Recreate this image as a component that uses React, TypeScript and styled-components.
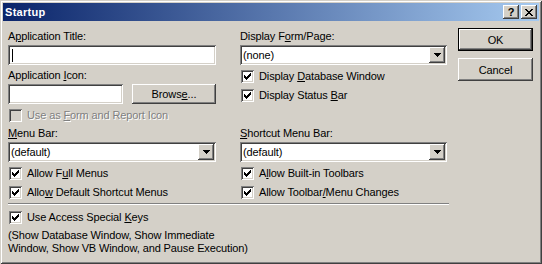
import React from 'react';
import styled, { createGlobalStyle, css } from 'styled-components';

const face = '#d4d0c8';
const shade = '#808080';
const dark = '#404040';
const light = '#ffffff';

const GlobalStyle = createGlobalStyle`
  html, body {
    margin: 0;
    padding: 0;
    background: ${face};
  }
  body {
    font-family: Tahoma, "Liberation Sans", Arial, sans-serif;
    font-size: 11px;
    letter-spacing: -0.12px;
    color: #000;
  }
`;

// classic 3D edges
const raised = css`
  box-shadow: inset -1px -1px ${dark}, inset 1px 1px ${light}, inset -2px -2px ${shade}, inset 2px 2px ${face};
`;

const sunken = css`
  box-shadow: inset 1px 1px ${shade}, inset -1px -1px ${light}, inset 2px 2px ${dark}, inset -2px -2px ${face};
`;

const Window = styled.div`
  width: 542px;
  height: 264px;
  box-sizing: border-box;
  padding: 3px;
  background: ${face};
  box-shadow: inset 1px 1px ${face}, inset -1px -1px ${dark}, inset 2px 2px ${light}, inset -2px -2px ${shade};
  display: flex;
  flex-direction: column;
`;

const TitleBar = styled.div`
  height: 18px;
  flex: none;
  display: flex;
  align-items: center;
  padding: 0 2px 0 2px;
  background: linear-gradient(to right, #0a246a, #a6caf0);
`;

const Title = styled.div`
  flex: 1;
  color: #fff;
  font-weight: bold;
  font-size: 11px;
  letter-spacing: 0.3px;
`;

const CaptionButton = styled.div<{ $gap?: number }>`
  width: 16px;
  height: 14px;
  box-sizing: border-box;
  margin-left: ${(p) => p.$gap ?? 0}px;
  background: ${face};
  ${raised};
  display: flex;
  align-items: center;
  justify-content: center;
  font-weight: bold;
  font-size: 11px;
  line-height: 14px;
  color: #000;
`;

const Client = styled.div`
  flex: 1;
  display: flex;
  padding-left: 5px;
`;

const Main = styled.div`
  width: 441px;
  padding-top: 9px;
  display: flex;
  flex-direction: column;
`;

const Section = styled.div<{ $mt?: number }>`
  display: grid;
  grid-template-columns: 208px 207px;
  column-gap: 24px;
  margin-top: ${(p) => p.$mt ?? 0}px;
`;

const Stack = styled.div`
  display: flex;
  flex-direction: column;
`;

const Label = styled.div<{ $mt?: number }>`
  margin-top: ${(p) => p.$mt ?? 0}px;
  height: 13px;
  line-height: 13px;
  white-space: nowrap;
`;

const Field = styled.div<{ $mt?: number; $width?: number }>`
  margin-top: ${(p) => p.$mt ?? 0}px;
  width: ${(p) => (p.$width ? `${p.$width}px` : 'auto')};
  height: 20px;
  box-sizing: border-box;
  padding: 2px;
  background: #fff;
  ${sunken};
  display: flex;
  align-items: center;
`;

const Caret = styled.span`
  width: 1px;
  height: 13px;
  margin-left: 2px;
  background: #000;
`;

const ComboText = styled.div`
  flex: 1;
  padding-left: 1px;
  line-height: 16px;
  white-space: nowrap;
`;

const DropButton = styled.div`
  width: 16px;
  height: 16px;
  flex: none;
  box-sizing: border-box;
  background: ${face};
  ${raised};
  display: flex;
  align-items: center;
  justify-content: center;
`;

const IconRow = styled.div<{ $mt?: number }>`
  margin-top: ${(p) => p.$mt ?? 0}px;
  display: flex;
  justify-content: space-between;
`;

const PushButton = styled.div<{ $width: number; $height: number; $default?: boolean }>`
  width: ${(p) => p.$width}px;
  height: ${(p) => p.$height}px;
  box-sizing: border-box;
  background: ${face};
  ${raised};
  border: ${(p) => (p.$default ? '1px solid #000' : 'none')};
  display: flex;
  align-items: center;
  justify-content: center;
  white-space: nowrap;
  flex: none;
`;

const CheckRow = styled.div<{ $mt?: number; $disabled?: boolean }>`
  margin-top: ${(p) => p.$mt ?? 0}px;
  height: 13px;
  padding-left: 1px;
  display: flex;
  align-items: flex-start;
  line-height: 13px;
  white-space: nowrap;
  color: ${(p) => (p.$disabled ? shade : '#000')};
  text-shadow: ${(p) => (p.$disabled ? `1px 1px 0 ${light}` : 'none')};
`;

const Box = styled.span<{ $disabled?: boolean }>`
  width: 13px;
  height: 13px;
  flex: none;
  box-sizing: border-box;
  margin-right: 5px;
  background: ${(p) => (p.$disabled ? face : '#fff')};
  ${sunken};
  display: flex;
  align-items: center;
  justify-content: center;
`;

const Separator = styled.div<{ $mt?: number }>`
  margin-top: ${(p) => p.$mt ?? 0}px;
  height: 0;
  border-top: 1px solid ${shade};
  border-bottom: 1px solid ${light};
`;

const Note = styled.div`
  margin-top: 5px;
  line-height: 13px;
  white-space: nowrap;
`;

const ButtonColumn = styled.div`
  margin-left: 9px;
  padding-top: 7px;
  display: flex;
  flex-direction: column;
  gap: 7px;
`;

const Key = styled.u`
  text-decoration: underline;
  text-underline-offset: 1px;
`;

const CheckMark = () => (
  <svg width="7" height="7" viewBox="0 0 7 7" shapeRendering="crispEdges">
    {[2, 3, 4, 3, 2, 1, 0].map((y, x) => (
      <rect key={x} x={x} y={y} width="1" height="3" fill="#000" />
    ))}
  </svg>
);

const CloseGlyph = () => (
  <svg width="8" height="7" viewBox="0 0 8 7" shapeRendering="crispEdges">
    {[0, 1, 2, 3, 2, 1, 0].map((x, y) => (
      <React.Fragment key={y}>
        <rect x={x} y={y} width="2" height="1" fill="#000" />
        <rect x={6 - x} y={y} width="2" height="1" fill="#000" />
      </React.Fragment>
    ))}
  </svg>
);

const DownArrow = () => (
  <svg width="7" height="4" viewBox="0 0 7 4" shapeRendering="crispEdges">
    {[0, 1, 2, 3].map((y) => (
      <rect key={y} x={y} y={y} width={7 - 2 * y} height="1" fill="#000" />
    ))}
  </svg>
);

const Check: React.FC<{ mt?: number; checked?: boolean; disabled?: boolean; children: React.ReactNode }> = ({
  mt,
  checked,
  disabled,
  children,
}) => (
  <CheckRow $mt={mt} $disabled={disabled}>
    <Box $disabled={disabled}>{checked && <CheckMark />}</Box>
    <span>{children}</span>
  </CheckRow>
);

const Combo: React.FC<{ mt?: number; value: string }> = ({ mt, value }) => (
  <Field $mt={mt}>
    <ComboText>{value}</ComboText>
    <DropButton>
      <DownArrow />
    </DropButton>
  </Field>
);

const App: React.FC = () => {
  return (
    <>
      <GlobalStyle />
      <Window>
        <TitleBar>
          <Title>Startup</Title>
          <CaptionButton>?</CaptionButton>
          <CaptionButton $gap={2}>
            <CloseGlyph />
          </CaptionButton>
        </TitleBar>
        <Client>
          <Main>
            <Section>
              <Stack>
                <Label>
                  A<Key>p</Key>plication Title:
                </Label>
                <Field $mt={2}>
                  <Caret />
                </Field>
                <Label $mt={4}>
                  Application <Key>I</Key>con:
                </Label>
                <IconRow $mt={2}>
                  <Field $width={115} />
                  <PushButton $width={84} $height={20}>
                    Brows<Key>e</Key>...
                  </PushButton>
                </IconRow>
                <Check mt={5} disabled>
                  Use as <Key>F</Key>orm and Report Icon
                </Check>
              </Stack>
              <Stack>
                <Label>
                  Display F<Key>o</Key>rm/Page:
                </Label>
                <Combo mt={2} value="(none)" />
                <Check mt={5} checked>
                  Display <Key>D</Key>atabase Window
                </Check>
                <Check mt={6} checked>
                  Display Status <Key>B</Key>ar
                </Check>
              </Stack>
            </Section>
            <Section $mt={5}>
              <Stack>
                <Label>
                  <Key>M</Key>enu Bar:
                </Label>
                <Combo mt={2} value="(default)" />
                <Check mt={5} checked>
                  Allow F<Key>u</Key>ll Menus
                </Check>
                <Check mt={6} checked>
                  Allo<Key>w</Key> Default Shortcut Menus
                </Check>
              </Stack>
              <Stack>
                <Label>
                  <Key>S</Key>hortcut Menu Bar:
                </Label>
                <Combo mt={2} value="(default)" />
                <Check mt={5} checked>
                  A<Key>l</Key>low Built-in Toolbars
                </Check>
                <Check mt={6} checked>
                  Allow Toolbar<Key>/</Key>Menu Changes
                </Check>
              </Stack>
            </Section>
            <Separator $mt={4} />
            <Check mt={6} checked>
              Use Access Special <Key>K</Key>eys
            </Check>
            <Note>
              (Show Database Window, Show Immediate
              <br />
              Window, Show VB Window, and Pause Execution)
            </Note>
          </Main>
          <ButtonColumn>
            <PushButton $width={75} $height={23} $default>
              OK
            </PushButton>
            <PushButton $width={75} $height={23}>
              Cancel
            </PushButton>
          </ButtonColumn>
        </Client>
      </Window>
    </>
  );
};

export default App;
